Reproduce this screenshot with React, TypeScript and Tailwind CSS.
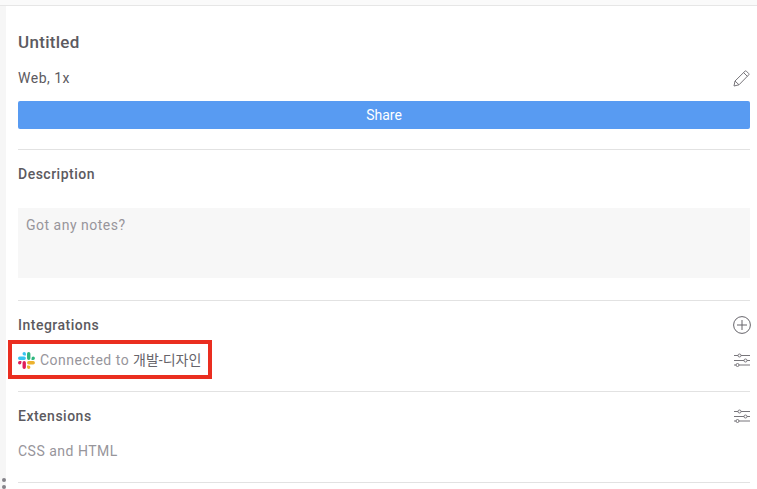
function SlidersIcon() {
  return (
    <svg width="16" height="14" viewBox="0 0 16 14" fill="none" stroke="#77757a" strokeWidth="1">
      <path d="M0 2.5h4M7 2.5h9M0 7.5h10M13 7.5h3M0 12h2M5 12h11" />
      <circle cx="5.5" cy="2.5" r="1.5" />
      <circle cx="11.5" cy="7.5" r="1.5" />
      <circle cx="3.5" cy="12" r="1.5" />
    </svg>
  );
}

function PlusCircleIcon() {
  return (
    <svg width="18" height="18" viewBox="0 0 18 18" fill="none" stroke="#66646a" strokeWidth="1" className="mr-[-1px]">
      <circle cx="9" cy="9" r="8.4" />
      <path d="M9 4v10M4 9h10" />
    </svg>
  );
}

function PencilIcon() {
  return (
    <svg width="17" height="17" viewBox="0 0 17 17" fill="none" stroke="#77757a" strokeWidth="1" strokeLinejoin="round">
      <path d="M1 16l1-5L12 1.2a1 1 0 0 1 1.4 0l2.3 2.3a1 1 0 0 1 0 1.4L6 14.8z" />
      <path d="M2 11l4 3.8M10.6 2.6l3.8 3.8" />
    </svg>
  );
}

function SlackIcon() {
  return (
    <svg width="17" height="17" viewBox="0 0 54 54">
      <path d="M19.712.133a5.381 5.381 0 0 0-5.376 5.387 5.381 5.381 0 0 0 5.376 5.386h5.376V5.52A5.381 5.381 0 0 0 19.712.133m0 14.365H5.376A5.381 5.381 0 0 0 0 19.884a5.381 5.381 0 0 0 5.376 5.387h14.336a5.381 5.381 0 0 0 5.376-5.387 5.381 5.381 0 0 0-5.376-5.386" fill="#36C5F0" />
      <path d="M53.76 19.884a5.381 5.381 0 0 0-5.376-5.386 5.381 5.381 0 0 0-5.376 5.386v5.387h5.376a5.381 5.381 0 0 0 5.376-5.387m-14.336 0V5.52A5.381 5.381 0 0 0 34.048.133a5.381 5.381 0 0 0-5.376 5.387v14.364a5.381 5.381 0 0 0 5.376 5.387 5.381 5.381 0 0 0 5.376-5.387" fill="#2EB67D" />
      <path d="M34.048 54a5.381 5.381 0 0 0 5.376-5.387 5.381 5.381 0 0 0-5.376-5.386h-5.376v5.386A5.381 5.381 0 0 0 34.048 54m0-14.365h14.336a5.381 5.381 0 0 0 5.376-5.386 5.381 5.381 0 0 0-5.376-5.387H34.048a5.381 5.381 0 0 0-5.376 5.387 5.381 5.381 0 0 0 5.376 5.386" fill="#ECB22E" />
      <path d="M0 34.249a5.381 5.381 0 0 0 5.376 5.386 5.381 5.381 0 0 0 5.376-5.386v-5.387H5.376A5.381 5.381 0 0 0 0 34.25m14.336-.001v14.364A5.381 5.381 0 0 0 19.712 54a5.381 5.381 0 0 0 5.376-5.387V34.25a5.381 5.381 0 0 0-5.376-5.387 5.381 5.381 0 0 0-5.376 5.387" fill="#E01E5A" />
    </svg>
  );
}

export default function App() {
  return (
    <div className="relative flex h-[489px] w-[757px] flex-col overflow-hidden bg-white font-['Roboto',sans-serif] text-[14px] tracking-[0.5px] text-[#5c5a60]">
      {/* Top strip */}
      <div className="h-[6px] shrink-0 border-b border-[#e6e6e6] bg-[#fafafa]" />

      <div className="flex flex-1">
        <div className="relative w-[6px] shrink-0 bg-[#f6f6f6]">
          <span className="absolute left-[2px] top-[472px] h-[4px] w-[4px] rounded-full bg-[#85838a]" />
          <span className="absolute left-[2px] top-[479px] h-[4px] w-[4px] rounded-full bg-[#85838a]" />
        </div>

        <div className="ml-[12px] w-[732px]">
          {/* Header */}
          <div className="border-b border-[#e2e2e2] pb-[20px] pt-[25px]">
            <h1 className="h-[22px] text-[17px] font-medium leading-[22px] tracking-[0.3px]">Untitled</h1>
            <div className="mt-[15px] flex h-[20px] items-center justify-between">
              <span className="leading-[20px]">Web, 1x</span>
              <PencilIcon />
            </div>
            <button className="mt-[13px] flex h-[28px] w-full items-center justify-center rounded-[2px] bg-[#589bf2] text-[14px] tracking-normal text-white">
              Share
            </button>
          </div>

          {/* Description */}
          <div className="border-b border-[#e2e2e2] pb-[22px] pt-[14px]">
            <h2 className="h-[20px] font-medium leading-[20px]">Description</h2>
            <div className="mt-[24px] h-[70px] bg-[#f7f7f7] px-[8px] py-[7px] leading-[20px] text-[#97959b]">
              Got any notes?
            </div>
          </div>

          {/* Integrations */}
          <div className="border-b border-[#e2e2e2] pb-[21px] pt-[14px]">
            <div className="flex h-[20px] items-center justify-between">
              <h2 className="font-medium leading-[20px]">Integrations</h2>
              <PlusCircleIcon />
            </div>
            <div className="mt-[15px] flex h-[20px] items-center justify-between">
              <div className="flex items-center gap-[5px]">
                <SlackIcon />
                <span className="leading-[20px] text-[#97959b]">
                  Connected to{' '}
                  <span className="font-['Roboto','Noto_Sans_CJK_KR',sans-serif] tracking-normal text-[#66646a]">개발-디자인</span>
                </span>
              </div>
              <SlidersIcon />
            </div>
          </div>

          {/* Extensions */}
          <div className="border-b border-[#e2e2e2] pb-[21px] pt-[14px]">
            <div className="flex h-[20px] items-center justify-between">
              <h2 className="font-medium leading-[20px]">Extensions</h2>
              <SlidersIcon />
            </div>
            <div className="mt-[15px] h-[20px] leading-[20px] text-[#97959b]">CSS and HTML</div>
          </div>
        </div>
      </div>

      {/* Red annotation box */}
      <div className="absolute left-[8px] top-[340px] h-[39px] w-[204px] border-4 border-[#ea2e20]" />
    </div>
  );
}
